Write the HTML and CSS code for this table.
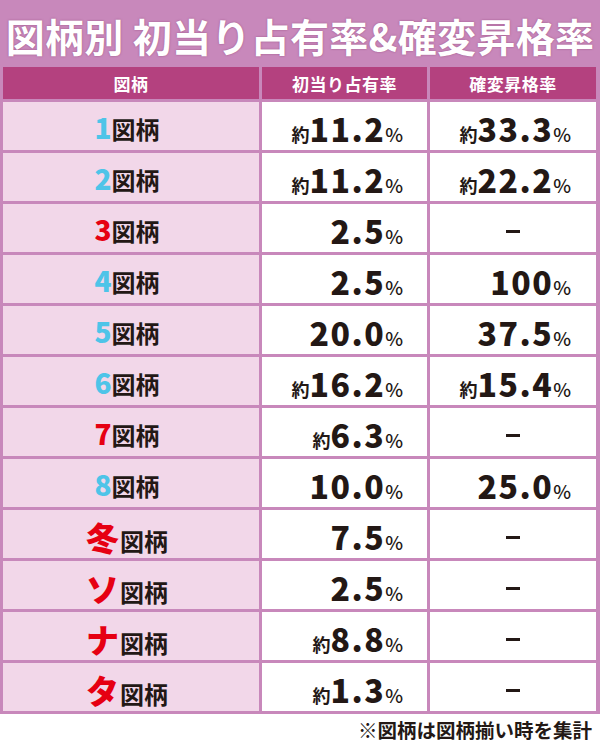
FILE: index.html
```html
<!DOCTYPE html>
<html lang="ja">
<head>
<meta charset="utf-8">
<title>図柄別 初当り占有率&確変昇格率</title>
<link rel="stylesheet" href="styles.css">
</head>
<body>
<div class="board">
  <h1 class="title">図柄別 初当り占有率&amp;確変昇格率</h1>
  <div class="grid">
    <div class="hd">図柄</div>
    <div class="hd">初当り占有率</div>
    <div class="hd">確変昇格率</div>

    <div class="sym"><span class="n blue">1</span><span class="z">図柄</span></div>
    <div class="val"><span class="ap">約</span><span class="num">11.2</span><span class="pc">%</span></div>
    <div class="val v3"><span class="ap">約</span><span class="num">33.3</span><span class="pc">%</span></div>

    <div class="sym"><span class="n blue">2</span><span class="z">図柄</span></div>
    <div class="val"><span class="ap">約</span><span class="num">11.2</span><span class="pc">%</span></div>
    <div class="val v3"><span class="ap">約</span><span class="num">22.2</span><span class="pc">%</span></div>

    <div class="sym"><span class="n red">3</span><span class="z">図柄</span></div>
    <div class="val"><span class="num">2.5</span><span class="pc">%</span></div>
    <div class="dash"><span class="bar"></span></div>

    <div class="sym"><span class="n blue">4</span><span class="z">図柄</span></div>
    <div class="val"><span class="num">2.5</span><span class="pc">%</span></div>
    <div class="val v3"><span class="num">100</span><span class="pc">%</span></div>

    <div class="sym"><span class="n blue">5</span><span class="z">図柄</span></div>
    <div class="val"><span class="num">20.0</span><span class="pc">%</span></div>
    <div class="val v3"><span class="num">37.5</span><span class="pc">%</span></div>

    <div class="sym"><span class="n blue">6</span><span class="z">図柄</span></div>
    <div class="val"><span class="ap">約</span><span class="num">16.2</span><span class="pc">%</span></div>
    <div class="val v3"><span class="ap">約</span><span class="num">15.4</span><span class="pc">%</span></div>

    <div class="sym"><span class="n red">7</span><span class="z">図柄</span></div>
    <div class="val"><span class="ap">約</span><span class="num">6.3</span><span class="pc">%</span></div>
    <div class="dash"><span class="bar"></span></div>

    <div class="sym"><span class="n blue">8</span><span class="z">図柄</span></div>
    <div class="val"><span class="num">10.0</span><span class="pc">%</span></div>
    <div class="val v3"><span class="num">25.0</span><span class="pc">%</span></div>

    <div class="sym"><span class="n red kana">冬</span><span class="z">図柄</span></div>
    <div class="val"><span class="num">7.5</span><span class="pc">%</span></div>
    <div class="dash"><span class="bar"></span></div>

    <div class="sym"><span class="n red kana">ソ</span><span class="z">図柄</span></div>
    <div class="val"><span class="num">2.5</span><span class="pc">%</span></div>
    <div class="dash"><span class="bar"></span></div>

    <div class="sym"><span class="n red kana">ナ</span><span class="z">図柄</span></div>
    <div class="val"><span class="ap">約</span><span class="num">8.8</span><span class="pc">%</span></div>
    <div class="dash"><span class="bar"></span></div>

    <div class="sym"><span class="n red kana">タ</span><span class="z">図柄</span></div>
    <div class="val"><span class="ap">約</span><span class="num">1.3</span><span class="pc">%</span></div>
    <div class="dash"><span class="bar"></span></div>
  </div>
</div>
<p class="note">※図柄は図柄揃い時を集計</p>
</body>
</html>
```

FILE: styles.css
```css
html, body {
  margin: 0;
  padding: 0;
  background: #ffffff;
}
body {
  width: 600px;
  height: 748px;
  overflow: hidden;
  font-family: "Noto Sans CJK JP", "Noto Sans", sans-serif;
  color: #231815;
}
.board {
  background: #c888bb;
  padding: 0 3px 3px 3px;
}
.title {
  margin: 0;
  height: 67px;
  line-height: 70px;
  text-align: center;
  color: #ffffff;
  font-size: 39px;
  font-weight: 700;
  letter-spacing: 0.3px;
  white-space: nowrap;
  text-shadow: 0 0 2px rgba(120, 40, 90, 0.6);
}
.grid {
  display: grid;
  grid-template-columns: 256px 165px 166px;
  grid-template-rows: 32px repeat(12, 48px);
  column-gap: 3px;
  row-gap: 3px;
}
.hd {
  background: #b4417f;
  color: #ffffff;
  font-size: 17px;
  font-weight: 700;
  display: flex;
  align-items: center;
  justify-content: center;
  letter-spacing: 0.5px;
}
.sym {
  background: #f2d7e9;
  display: flex;
  align-items: baseline;
  justify-content: center;
  padding-top: 11px;
  padding-right: 8px;
  box-sizing: border-box;
}
.n {
  font-size: 28px;
  font-weight: 900;
  line-height: 1;
}
.n.kana {
  font-size: 33px;
  margin-right: 1px;
}
.blue { color: #4ec4e8; }
.red { color: #e60012; }
.z {
  font-size: 24px;
  font-weight: 700;
  line-height: 1;
  color: #231815;
}
.val {
  background: #ffffff;
  display: flex;
  align-items: baseline;
  justify-content: flex-end;
  padding-right: 24px;
  padding-top: 10px;
  box-sizing: border-box;
}
.val.v3 {
  padding-right: 25px;
}
.ap {
  font-size: 18px;
  font-weight: 700;
  line-height: 1;
}
.num {
  font-size: 32px;
  font-weight: 900;
  line-height: 1;
  letter-spacing: 1.5px;
}
.pc {
  font-size: 19px;
  font-weight: 500;
  line-height: 1;
}
.dash {
  background: #ffffff;
  display: flex;
  align-items: center;
  justify-content: center;
  padding-top: 6px;
  box-sizing: border-box;
}
.bar {
  display: block;
  width: 14px;
  height: 3px;
  background: #231815;
}
.note {
  margin: 3px 8px 0 0;
  text-align: right;
  font-size: 19.5px;
  font-weight: 700;
  line-height: 26px;
}
```
